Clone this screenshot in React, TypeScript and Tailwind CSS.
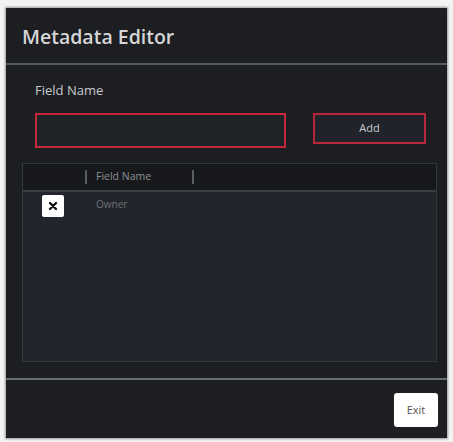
const font = { fontFamily: '"Open Sans", "Noto Sans", sans-serif' };

function CloseBox() {
  return (
    <button className="flex h-[22px] w-[22px] items-center justify-center rounded-[2px] bg-white">
      <svg width="10" height="10" viewBox="0 0 10 10">
        <path d="M2 2 L8 8 M8 2 L2 8" stroke="#111" strokeWidth="2.4" strokeLinecap="round" />
      </svg>
    </button>
  );
}

export default function App() {
  return (
    <div className="h-[442px] w-[453px] bg-[#f3f3f3] pl-[6px] pt-[8px]" style={font}>
      <div className="flex h-[430px] w-[441px] flex-col bg-[#1c1e22] shadow-[0_0_2px_1px_#9a9a9a]">
        <div className="flex h-[55px] items-center pl-[16px] pt-[2px]">
          <h1 className="text-[19.5px] font-semibold text-[#d6d6d8]">Metadata Editor</h1>
        </div>
        <div className="h-[2px] bg-[#54575b]" />

        <div className="flex flex-1 flex-col px-[16px]">
          <div className="pl-[13px] pt-[16px] text-[13px] text-[#c9cacc]">Field Name</div>
          <div className="mt-[12px] flex items-start pl-[13px]">
            <input className="h-[35px] w-[251px] border-2 border-[#c3273a] bg-[#1f2226] outline-none" />
            <button className="ml-[27px] h-[31px] w-[113px] border-2 border-[#b8283a] bg-[#20242a] text-[11px] text-[#c9cacc]">
              Add
            </button>
          </div>

          <div className="mt-[15px] flex h-[199px] w-[415px] flex-col border border-[#34373c] bg-[#22252b]">
            <div className="flex h-[26px] items-center bg-[#16181b] text-[10.5px] text-[#8c8f94]">
              <div className="ml-[62px] h-[14px] w-[2px] bg-[#5a5d62]" />
              <div className="ml-[9px] w-[96px]">Field Name</div>
              <div className="h-[14px] w-[2px] bg-[#5a5d62]" />
            </div>
            <div className="h-[2px] bg-[#3a3d42]" />
            <div className="flex items-start pt-[3px]">
              <div className="ml-[19px]">
                <CloseBox />
              </div>
              <div className="ml-[32px] pt-[2px] text-[10px] text-[#6e7176]">Owner</div>
            </div>
          </div>
        </div>

        <div className="h-[2px] bg-[#6a6d71]" />
        <div className="flex h-[58px] items-start justify-end bg-[#1d1f22] pr-[9px] pt-[13px]">
          <button className="h-[34px] w-[44px] rounded-[3px] bg-white text-[11px] text-[#555]">Exit</button>
        </div>
      </div>
    </div>
  );
}
